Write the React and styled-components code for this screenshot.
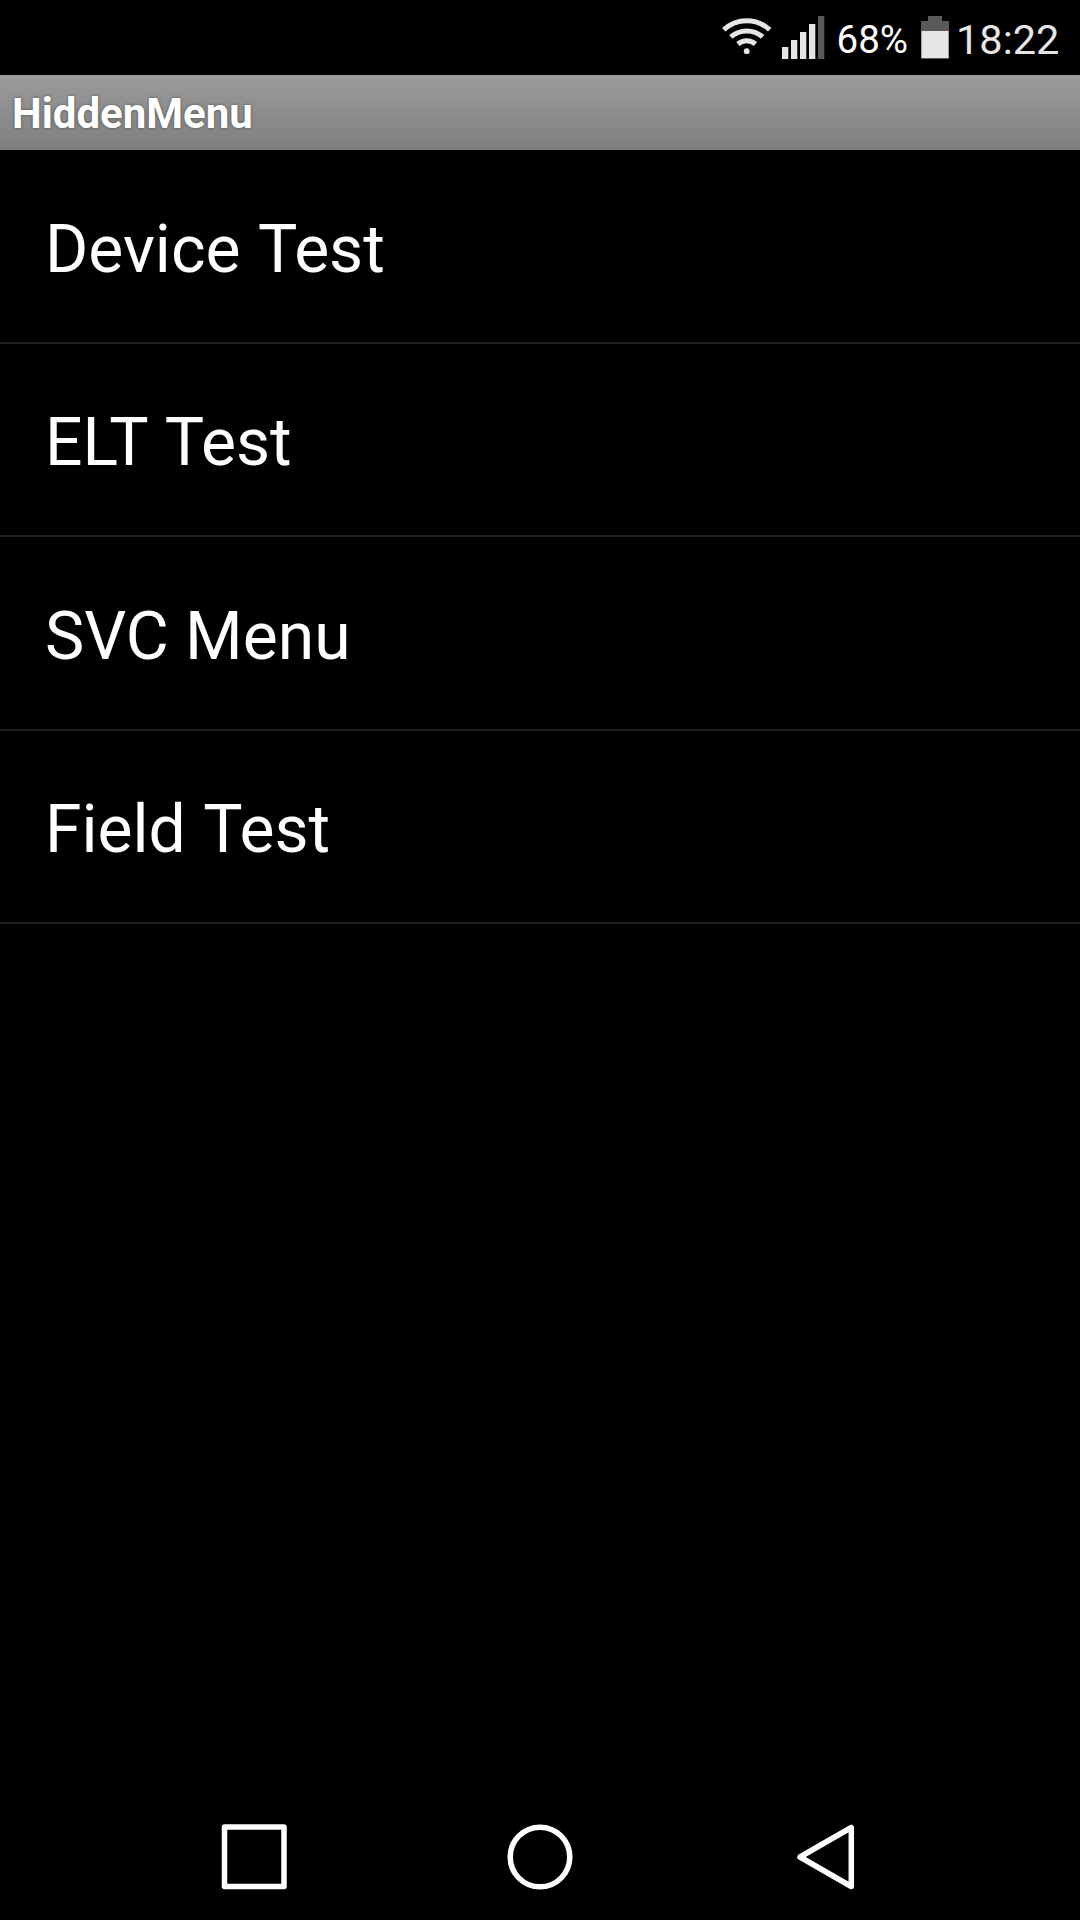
import React from 'react';
import styled, { createGlobalStyle } from 'styled-components';

const GlobalStyle = createGlobalStyle`
  body {
    margin: 0;
    background-color: #000;
  }
`;

const Screen = styled.div`
  display: flex;
  flex-direction: column;
  width: 1080px;
  height: 1920px;
  background-color: #000;
  color: #fff;
  font-family: Roboto, 'Liberation Sans', sans-serif;
  overflow: hidden;
`;

const StatusBar = styled.header`
  display: flex;
  justify-content: flex-end;
  align-items: flex-start;
  box-sizing: border-box;
  height: 75px;
  padding-right: 20px;
`;

const StatusIcon = styled.svg`
  display: block;
  flex: none;
  height: 75px;
  margin-right: ${(props) => props.$gap}px;
`;

const StatusText = styled.span`
  flex: none;
  color: ${(props) => props.$color};
  font-size: ${(props) => props.$size}px;
  line-height: 48px;
  width: ${(props) => props.$width}px;
  padding-top: 16px;
  white-space: nowrap;
`;

const TitleBar = styled.div`
  display: flex;
  align-items: center;
  box-sizing: border-box;
  height: 75px;
  padding: 2px 0 0 12px;
  background: linear-gradient(#9c9c9c, #7e7e7e);
`;

const Title = styled.h1`
  margin: 0;
  font-size: 42px;
  font-weight: 700;
  line-height: 49px;
  text-shadow: 0 0 3px rgba(0, 0, 0, 0.5);
`;

const MenuList = styled.ul`
  flex: 1;
  margin: 0;
  padding: 0;
  list-style: none;
`;

const MenuItem = styled.li`
  display: flex;
  align-items: center;
  box-sizing: border-box;
  height: 193.5px;
  padding: 7px 45px 0;
  border-bottom: 2px solid #212121;
  font-size: 66px;
  word-spacing: ${(props) => props.$wordSpacing}px;
`;

const NavBar = styled.nav`
  display: flex;
  justify-content: center;
  height: 126px;
`;

const NavButton = styled.button`
  width: 286px;
  padding: 0;
  border: 0;
  background: none;
`;

const NavIcon = styled.svg`
  display: block;
  margin: 0 auto;
  fill: none;
  stroke: #fff;
  stroke-width: 5.5;
  stroke-linejoin: round;
`;

// Roboto kerns the space before a "T", so those labels get it back
const items = [
  { label: 'Device Test', wordSpacing: 2.4 },
  { label: 'ELT Test', wordSpacing: 2.4 },
  { label: 'SVC Menu', wordSpacing: 0 },
  { label: 'Field Test', wordSpacing: 2.4 },
];

const WifiIcon = () => (
  <StatusIcon $gap={10} width="50" viewBox="0 0 50 75">
    <g fill="none" stroke="#e6e6e6" strokeWidth="5">
      <path d="M1.7 29.8a33.5 33.5 0 0 1 46 0" />
      <path d="M8.8 36.9a24 24 0 0 1 31.8 0" />
      <path d="M15.9 44a13.6 13.6 0 0 1 17.6 0" />
    </g>
    <circle cx="24.7" cy="51.2" r="2.9" fill="#e6e6e6" />
  </StatusIcon>
);

const SignalIcon = () => (
  <StatusIcon $gap={11.5} width="43" viewBox="0 0 43 75">
    <g fill="#e6e6e6">
      <rect x="0" y="47" width="6.3" height="12" />
      <rect x="9" y="40" width="6.3" height="19" />
      <rect x="18" y="32" width="6.3" height="27" />
      <rect x="27" y="24" width="6.3" height="35" />
    </g>
    <rect x="36" y="16" width="6.3" height="43" fill="#595959" />
  </StatusIcon>
);

const BatteryIcon = () => (
  <StatusIcon $gap={7} width="28" viewBox="0 0 28 75">
    <path d="M7 16h14v5h7v38H0V21h7z" fill="#595959" />
    <rect x="0.5" y="31" width="27" height="27" fill="#e6e6e6" />
  </StatusIcon>
);

const App = () => (
  <>
    <GlobalStyle />
    <Screen>
      <StatusBar>
        <WifiIcon />
        <SignalIcon />
        <StatusText $color="#fff" $size={38.5} $width={84.5}>68%</StatusText>
        <BatteryIcon />
        <StatusText $color="#e6e6e6" $size={41.5} $width={104}>18:22</StatusText>
      </StatusBar>
      <TitleBar>
        <Title>HiddenMenu</Title>
      </TitleBar>
      <MenuList>
        {items.map((item) => (
          <MenuItem key={item.label} $wordSpacing={item.wordSpacing}>
            {item.label}
          </MenuItem>
        ))}
      </MenuList>
      <NavBar>
        <NavButton aria-label="Recent apps">
          <NavIcon width="66" height="126" viewBox="0 0 66 126">
            <rect x="3.5" y="33" width="59.5" height="59.5" />
          </NavIcon>
        </NavButton>
        <NavButton aria-label="Home">
          <NavIcon width="66" height="126" viewBox="0 0 66 126">
            <circle cx="33" cy="63" r="29.8" />
          </NavIcon>
        </NavButton>
        <NavButton aria-label="Back">
          <NavIcon width="66" height="126" viewBox="0 0 66 126">
            <path d="M58.3 33.5v59L7 63z" />
          </NavIcon>
        </NavButton>
      </NavBar>
    </Screen>
  </>
);

export default App;
